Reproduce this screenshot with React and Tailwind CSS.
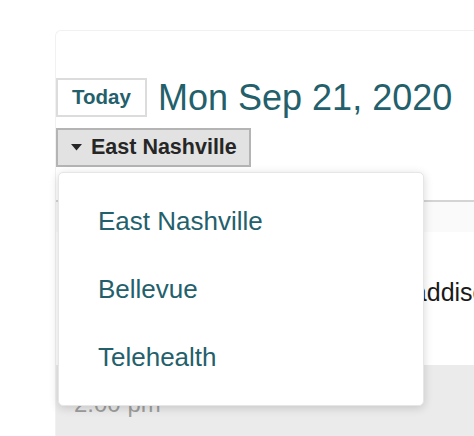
import React from 'react';

const teal = 'text-[#245f6c]';

const locations = ['East Nashville', 'Bellevue', 'Telehealth'];

function LocationMenu() {
  return (
    <div className="absolute left-[2px] top-[44px] z-10 w-[366px] rounded-[5px] bg-white py-[14px] shadow-[0_2px_10px_rgba(0,0,0,0.16)] border border-[#e6e6e6]">
      {locations.map((loc) => (
        <div key={loc} className={`flex h-[68px] items-center pl-[39px] text-[26px] ${teal}`}>
          {loc}
        </div>
      ))}
    </div>
  );
}

export default function App() {
  return (
    <div
      className="h-[436px] w-full overflow-hidden bg-white pl-[55px] pt-[30px]"
      style={{ fontFamily: '"Liberation Sans", Arial, sans-serif' }}
    >
      <div className="h-[420px] w-[470px] rounded-tl-[6px] border-l border-t border-[#f1f1f1] bg-white pt-[47px]">
        {/* date header */}
        <div className="flex items-center gap-[11px]">
          <button className={`h-[39px] w-[91px] border-2 border-[#dcdcdc] bg-white text-[20.5px] font-bold ${teal}`}>
            Today
          </button>
          <h1 className={`text-[36px] font-normal leading-none ${teal}`}>Mon Sep 21, 2020</h1>
        </div>

        <div className="relative mt-[11px]">
          <button className="flex h-[39px] w-[195px] items-center gap-[9px] border-2 border-[#b4b4b4] bg-[#e2e2e2] pl-[13px] text-[21.5px] font-bold text-[#262626]">
            <svg width="11" height="7" viewBox="0 0 11 7">
              <path d="M0 0h11L5.5 6.5z" fill="#262626" />
            </svg>
            East Nashville
          </button>

          <LocationMenu />

          {/* schedule table */}
          <div className="h-[35px] border-b-2 border-[#d4d4d4]" />
          <div className="h-[30px] bg-[#fafafa]" />
          <div className="flex h-[133px] overflow-hidden whitespace-nowrap bg-white pt-[46px] text-[25px] leading-[28px] text-[#1a1a1a]">
            <span className="w-[336px] shrink-0 pl-[18px] text-[24px] text-[#9e9e9e]">1:00 pm</span>
            <span>Maddison</span>
          </div>
          <div className="h-[90px] bg-[#ebebeb] pl-[18px] pt-[25px] text-[24px] leading-[28px] text-[#9e9e9e]">
            2:00 pm
          </div>
        </div>
      </div>
    </div>
  );
}
